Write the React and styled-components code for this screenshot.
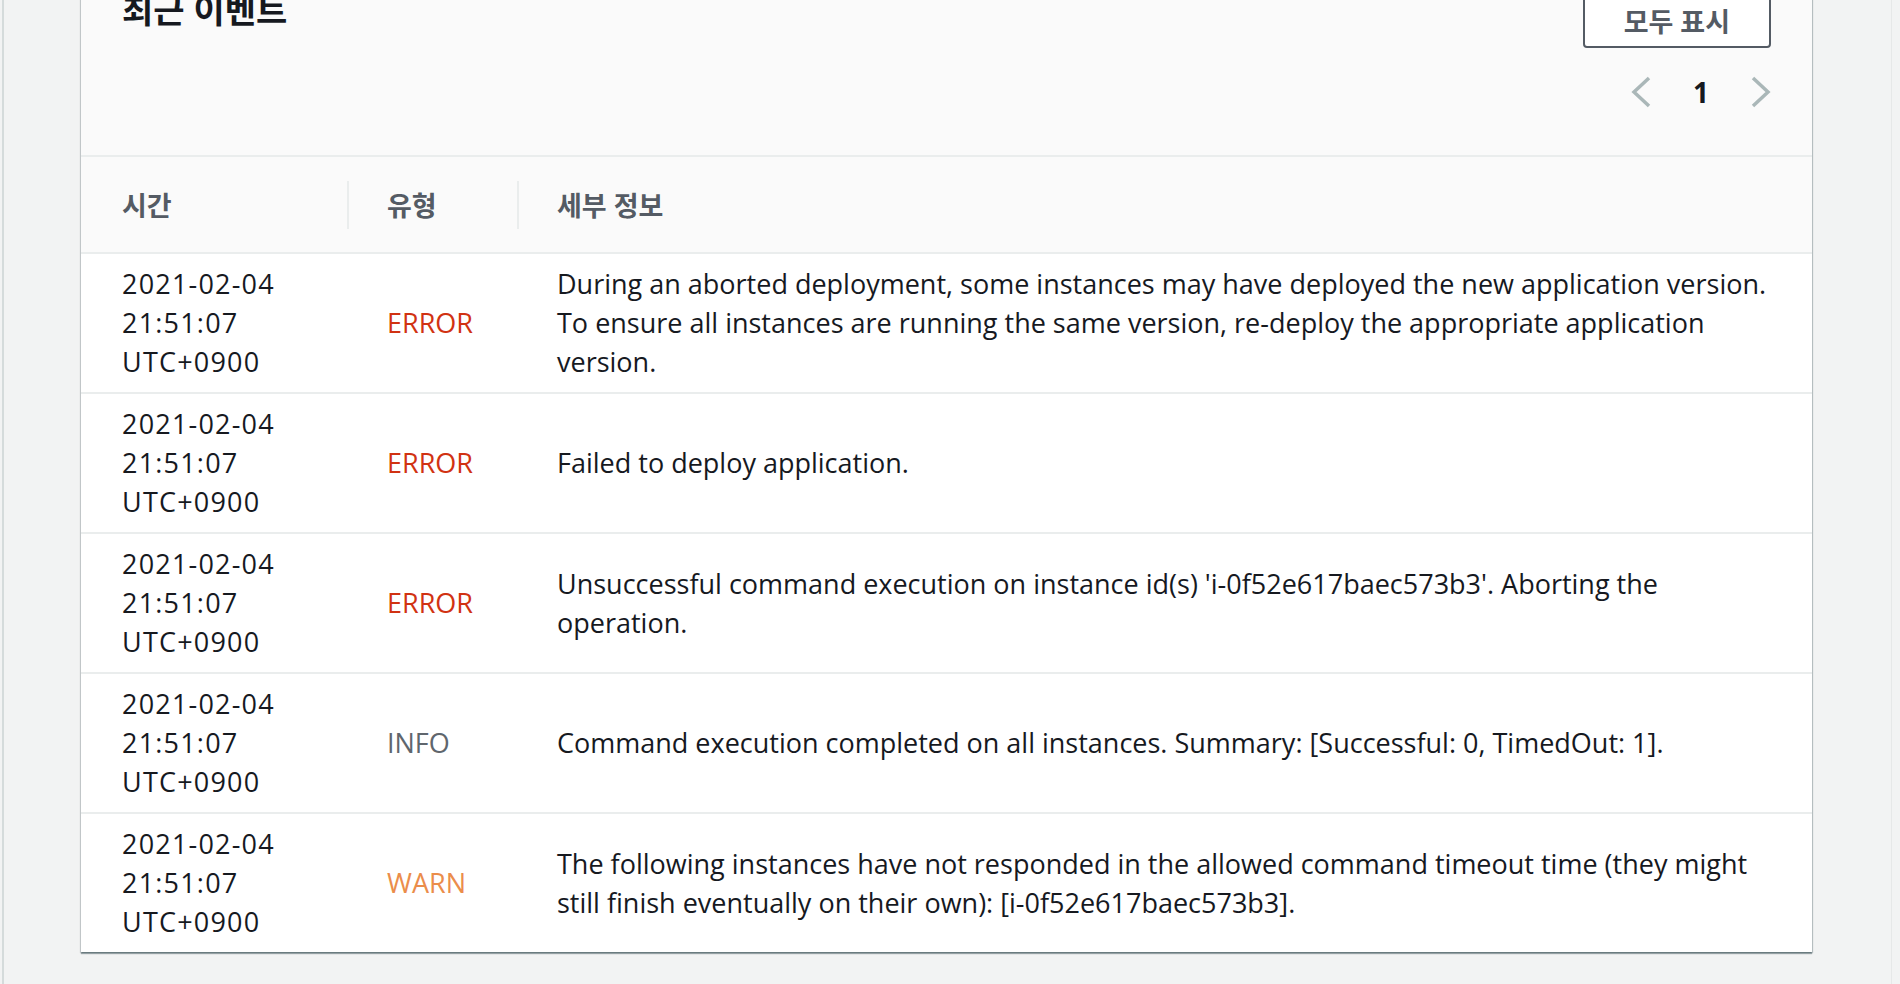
import React from "react"
import styled, { createGlobalStyle } from "styled-components"

const events = [
    {
        type: "ERROR",
        detail: "During an aborted deployment, some instances may have deployed the new application version. To ensure all instances are running the same version, re-deploy the appropriate application version.",
    },
    { type: "ERROR", detail: "Failed to deploy application." },
    {
        type: "ERROR",
        detail: "Unsuccessful command execution on instance id(s) 'i-0f52e617baec573b3'. Aborting the operation.",
    },
    {
        type: "INFO",
        detail: "Command execution completed on all instances. Summary: [Successful: 0, TimedOut: 1].",
    },
    {
        type: "WARN",
        detail: "The following instances have not responded in the allowed command timeout time (they might still finish eventually on their own): [i-0f52e617baec573b3].",
    },
]

const typeColors = {
    ERROR: "#d13212",
    INFO: "#5f666d",
    WARN: "#eb8d4b",
}

function Chevron({ dir }) {
    const points = dir === "left" ? "18,2 3,16 18,30" : "2,2 17,16 2,30"
    return (
        <svg width="20" height="32" viewBox="0 0 20 32">
            <polyline points={points} fill="none" stroke="#aab7b8" strokeWidth="3.5" />
        </svg>
    )
}

export default function App() {
    return (
        <>
            <GlobalStyle />
            <Page>
                <Main>
                    <Card>
                        <CardHeader>
                            <Title>최근 이벤트</Title>
                            <Actions>
                                <Button>모두 표시</Button>
                                <Pagination>
                                    <Chevron dir="left" />
                                    <PageNumber>1</PageNumber>
                                    <Chevron dir="right" />
                                </Pagination>
                            </Actions>
                        </CardHeader>
                        <HeadRow>
                            <HeadCell>
                                <HeadLabel first>시간</HeadLabel>
                            </HeadCell>
                            <HeadCell>
                                <Divider />
                                <HeadLabel>유형</HeadLabel>
                            </HeadCell>
                            <HeadCell>
                                <Divider />
                                <HeadLabel>세부 정보</HeadLabel>
                            </HeadCell>
                        </HeadRow>
                        {events.map((ev, i) => (
                            <Row key={i} last={i === events.length - 1}>
                                <Cell first>
                                    <Line>2021-02-04</Line>
                                    <Line>21:51:07</Line>
                                    <Line>UTC+0900</Line>
                                </Cell>
                                <Cell>
                                    <Type color={typeColors[ev.type]}>{ev.type}</Type>
                                </Cell>
                                <Cell detail>{ev.detail}</Cell>
                            </Row>
                        ))}
                    </Card>
                </Main>
            </Page>
        </>
    )
}

const GlobalStyle = createGlobalStyle`
    html, body {
        margin: 0;
        padding: 0;
        overflow: hidden;
        background-color: #f2f3f3;
    }

    body {
        font-family: "Open Sans", "Noto Sans CJK KR", sans-serif;
        color: #16191f;
    }
`

const Page = styled.div`
    width: 100vw;
    height: 100vh;
    display: flex;
    background-color: #f2f3f3;
`

const Main = styled.div`
    flex: 1;
    margin: 0 8px 0 2px;
    padding: 0 79px 0 77px;
    border-left: 2px solid #d5dbdb;
    border-right: 1px solid #e6e8e8;
`

const Card = styled.div`
    margin-top: -24px;
    background-color: #ffffff;
    box-shadow: 0 2px 1px 0 rgba(0, 28, 36, 0.35), 1px 1px 1px 0 rgba(0, 28, 36, 0.2), -1px 1px 1px 0 rgba(0, 28, 36, 0.15);
`

const CardHeader = styled.div`
    display: flex;
    justify-content: space-between;
    align-items: flex-start;
    padding: 16px 41px 43px 41px;
    background-color: #fafafa;
    border-bottom: 2px solid #eaeded;
`

const Title = styled.h2`
    margin: 1px 0 0 0;
    font-size: 34px;
    line-height: 34px;
    font-weight: 700;
    color: #16191f;
`

const Actions = styled.div`
    display: flex;
    flex-direction: column;
    align-items: flex-end;
`

const Button = styled.div`
    box-sizing: border-box;
    height: 56px;
    padding: 0 39px;
    display: flex;
    align-items: center;
    border: 2px solid #545b64;
    border-radius: 4px;
    background-color: #ffffff;
    color: #545b64;
    font-size: 27px;
    font-weight: 700;
`

const Pagination = styled.div`
    margin-top: 24px;
    height: 40px;
    display: flex;
    align-items: center;
`

const PageNumber = styled.span`
    width: 100px;
    text-align: center;
    font-size: 28px;
    font-weight: 700;
    color: #16191f;
`

const grid = `
    display: grid;
    grid-template-columns: 266px 170px 1fr;
`

const HeadRow = styled.div`
    ${grid}
    height: 95px;
    background-color: #fafafa;
    border-bottom: 2px solid #eaeded;
`

const HeadCell = styled.div`
    display: flex;
    align-items: center;
`

const Divider = styled.div`
    width: 2px;
    height: 48px;
    background-color: #eaeded;
`

const HeadLabel = styled.span`
    margin-left: ${props => props.first ? "41px" : "38px"};
    font-size: 27px;
    font-weight: 700;
    color: #545b64;
`

const Row = styled.div`
    ${grid}
    border-bottom: ${props => props.last ? "none" : "2px solid #eaeded"};
`

const Cell = styled.div`
    padding: 10px ${props => props.detail ? "20px" : "0"} 11px ${props => props.first ? "41px" : "40px"};
    display: flex;
    flex-direction: column;
    justify-content: center;
    font-size: 27px;
    line-height: 39px;
    color: #16191f;
`

const Line = styled.span`
    display: block;
    white-space: nowrap;
    letter-spacing: 1.2px;
`

const Type = styled.span`
    color: ${props => props.color};
`
